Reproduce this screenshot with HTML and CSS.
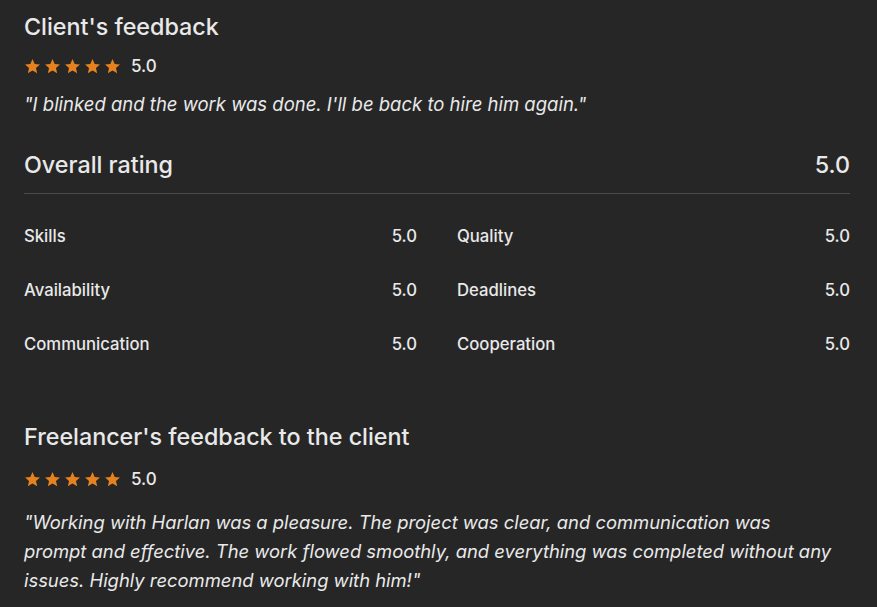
FILE: index.html
```html
<!DOCTYPE html>
<html>
<head>
<meta charset="utf-8">
<link rel="stylesheet" href="styles.css">
</head>
<body>
<div class="page">
  <h2 class="title">Client's feedback</h2>
  <div class="stars-row">
    <div class="stars">
      <svg class="star" viewBox="0 0 24 24"><path d="M12 1.5l3.1 6.9 7.4.7-5.6 5 1.7 7.4L12 17.7l-6.6 3.8 1.7-7.4-5.6-5 7.4-.7z"/></svg>
      <svg class="star" viewBox="0 0 24 24"><path d="M12 1.5l3.1 6.9 7.4.7-5.6 5 1.7 7.4L12 17.7l-6.6 3.8 1.7-7.4-5.6-5 7.4-.7z"/></svg>
      <svg class="star" viewBox="0 0 24 24"><path d="M12 1.5l3.1 6.9 7.4.7-5.6 5 1.7 7.4L12 17.7l-6.6 3.8 1.7-7.4-5.6-5 7.4-.7z"/></svg>
      <svg class="star" viewBox="0 0 24 24"><path d="M12 1.5l3.1 6.9 7.4.7-5.6 5 1.7 7.4L12 17.7l-6.6 3.8 1.7-7.4-5.6-5 7.4-.7z"/></svg>
      <svg class="star" viewBox="0 0 24 24"><path d="M12 1.5l3.1 6.9 7.4.7-5.6 5 1.7 7.4L12 17.7l-6.6 3.8 1.7-7.4-5.6-5 7.4-.7z"/></svg>
    </div>
    <span class="score">5.0</span>
  </div>
  <p class="quote">"I blinked and the work was done. I'll be back to hire him again."</p>

  <div class="overall">
    <span>Overall rating</span>
    <span>5.0</span>
  </div>

  <div class="grid">
    <div class="item"><span>Skills</span><span>5.0</span></div>
    <div class="item"><span>Quality</span><span>5.0</span></div>
    <div class="item"><span>Availability</span><span>5.0</span></div>
    <div class="item"><span>Deadlines</span><span>5.0</span></div>
    <div class="item"><span>Communication</span><span>5.0</span></div>
    <div class="item"><span>Cooperation</span><span>5.0</span></div>
  </div>

  <h2 class="title second">Freelancer's feedback to the client</h2>
  <div class="stars-row second">
    <div class="stars">
      <svg class="star" viewBox="0 0 24 24"><path d="M12 1.5l3.1 6.9 7.4.7-5.6 5 1.7 7.4L12 17.7l-6.6 3.8 1.7-7.4-5.6-5 7.4-.7z"/></svg>
      <svg class="star" viewBox="0 0 24 24"><path d="M12 1.5l3.1 6.9 7.4.7-5.6 5 1.7 7.4L12 17.7l-6.6 3.8 1.7-7.4-5.6-5 7.4-.7z"/></svg>
      <svg class="star" viewBox="0 0 24 24"><path d="M12 1.5l3.1 6.9 7.4.7-5.6 5 1.7 7.4L12 17.7l-6.6 3.8 1.7-7.4-5.6-5 7.4-.7z"/></svg>
      <svg class="star" viewBox="0 0 24 24"><path d="M12 1.5l3.1 6.9 7.4.7-5.6 5 1.7 7.4L12 17.7l-6.6 3.8 1.7-7.4-5.6-5 7.4-.7z"/></svg>
      <svg class="star" viewBox="0 0 24 24"><path d="M12 1.5l3.1 6.9 7.4.7-5.6 5 1.7 7.4L12 17.7l-6.6 3.8 1.7-7.4-5.6-5 7.4-.7z"/></svg>
    </div>
    <span class="score">5.0</span>
  </div>
  <p class="quote long">"Working with Harlan was a pleasure. The project was clear, and communication was<br>prompt and effective. The work flowed smoothly, and everything was completed without any issues. Highly recommend working with him!"</p>
</div>
</body>
</html>
```

FILE: styles.css
```css
html, body {
  margin: 0;
  padding: 0;
  background: #262626;
}
body {
  font-family: Inter, "Liberation Sans", Arial, sans-serif;
  color: #e9e9e9;
}
.page {
  width: 826px;
  padding: 12px 0 0 24px;
}
.title {
  margin: 0;
  font-size: 23.3px;
  font-weight: 500;
  line-height: 30px;
}
.title.second {
  margin-top: 68px;
}
.stars-row {
  display: flex;
  align-items: center;
  margin-top: 14px;
  height: 20px;
}
.stars-row.second {
  margin-top: 17px;
}
.stars {
  display: flex;
  gap: 3px;
}
.star {
  width: 17px;
  height: 17px;
  fill: #e5821f;
}
.score {
  margin-left: 10px;
  font-size: 17px;
  font-weight: 500;
}
.quote {
  margin: 14px 0 0;
  font-size: 18.5px;
  font-style: italic;
  line-height: 29px;
}
.quote.long {
  margin-top: 19px;
  font-size: 18.4px;
}
.overall {
  display: flex;
  justify-content: space-between;
  margin-top: 31px;
  padding-bottom: 13px;
  border-bottom: 1px solid #4a4a4a;
  font-size: 23.3px;
  font-weight: 500;
  line-height: 30px;
}
.grid {
  display: grid;
  grid-template-columns: 1fr 1fr;
  column-gap: 40px;
  row-gap: 34px;
  margin-top: 32px;
}
.item {
  display: flex;
  justify-content: space-between;
  font-size: 16.7px;
  font-weight: 500;
  line-height: 20px;
}
```
